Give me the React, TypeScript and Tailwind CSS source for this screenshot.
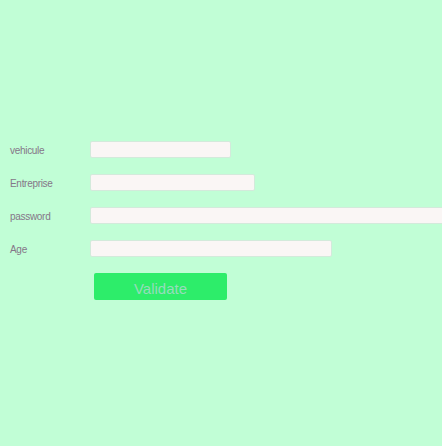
export default function App() {
  const fields = [
    { label: 'vehicule', width: 'w-[141px]', type: 'text' },
    { label: 'Entreprise', width: 'w-[165px]', type: 'text' },
    { label: 'password', width: 'w-[360px]', type: 'password' },
    { label: 'Age', width: 'w-[242px]', type: 'text' },
  ];

  return (
    <div className="min-h-[446px] w-[442px] overflow-hidden bg-[#c1fed6] font-['Liberation_Sans',Arial,sans-serif]">
      <form className="flex flex-col gap-[16px] pt-[141px]" onSubmit={(e) => e.preventDefault()}>
        {fields.map((f) => (
          <div key={f.label} className="flex items-center whitespace-nowrap">
            <label className="w-[90px] shrink-0 pl-[10px] pt-[2px] text-[10px] tracking-[-0.3px] text-[#857688]">
              {f.label}
            </label>
            <input
              type={f.type}
              className={`${f.width} h-[17px] shrink-0 rounded-[2px] border border-[#d3eadb] bg-[#faf6f5] outline-none`}
            />
          </div>
        ))}
        <div className="pl-[94px]">
          <button
            type="submit"
            className="h-[27px] w-[133px] rounded-[2px] bg-[#2ded6a] pt-[3px] text-[15px] leading-none text-[#96dcbc]"
          >
            Validate
          </button>
        </div>
      </form>
    </div>
  );
}
